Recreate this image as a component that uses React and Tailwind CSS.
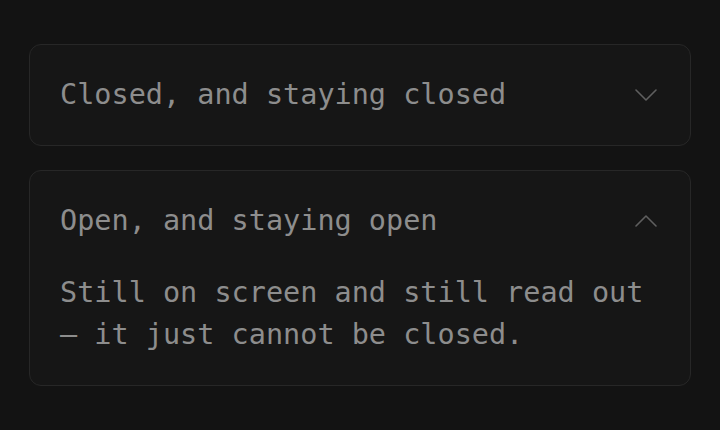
import React from "react";

const mono = { fontFamily: '"DejaVu Sans Mono", "Liberation Mono", monospace' };

function Chevron({ up }) {
  return (
    <svg width="22" height="12" viewBox="0 0 22 12" fill="none" className="mr-[3px] shrink-0">
      <polyline
        points={up ? "1,11 11,1 21,11" : "1,1 11,11 21,1"}
        stroke="#5f5f5f"
        strokeWidth="1.6"
        strokeLinecap="round"
        strokeLinejoin="round"
      />
    </svg>
  );
}

function Item({ title, open, children }) {
  return (
    <section className="rounded-[12px] border border-[#272727] bg-[#161616] px-[30px] py-[29px]">
      <div className="flex items-center justify-between h-[42px]">
        <span className="text-[28.5px] leading-[42px] text-[#8d8d8d] whitespace-nowrap">{title}</span>
        <Chevron up={open} />
      </div>
      {open && (
        <p className="mt-[30px] text-[28.5px] leading-[42px] text-[#8d8d8d]">{children}</p>
      )}
    </section>
  );
}

export default function App() {
  return (
    <div className="min-h-screen bg-[#131313] flex flex-col justify-center px-[29px]" style={mono}>
      <div className="flex flex-col gap-[24px]">
        <Item title="Closed, and staying closed" />
        <Item title="Open, and staying open" open>
          Still on screen and still read out
          <br />— it just cannot be closed.
        </Item>
      </div>
    </div>
  );
}
